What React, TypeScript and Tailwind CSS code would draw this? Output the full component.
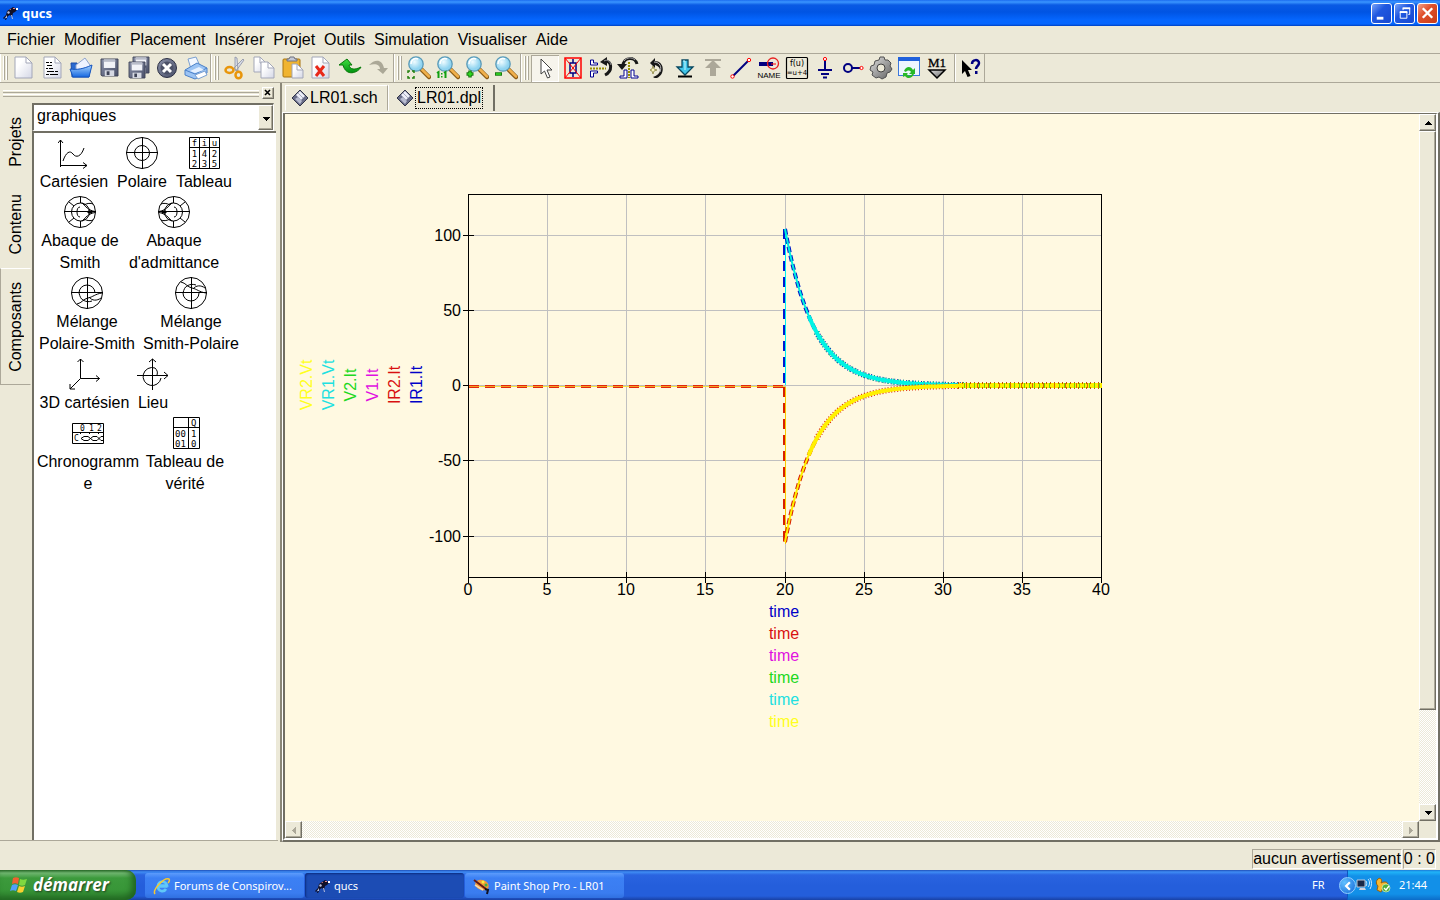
import { useState } from 'react';
import type { ReactNode } from 'react';

// 24x24 icon shell
const Icon = ({ children, className = 'w-6 h-6' }: { children: ReactNode; className?: string }) => (
  <svg viewBox="0 0 24 24" className={className} fill="none" aria-hidden="true">
    {children}
  </svg>
);

const Page = ({ x = 3, y = 1, w = 17, h = 21 }: { x?: number; y?: number; w?: number; h?: number }) => (
  <>
    <path
      d={`M${x} ${y}h${w - 6}l6 6v${h - 6}h-${w}z`}
      fill="url(#paper)"
      stroke="#a3a7b8"
      strokeWidth="1"
    />
    <path d={`M${x + w - 6} ${y}v6h6z`} fill="#fff" stroke="#a3a7b8" strokeWidth="1" />
  </>
);

const Floppy = ({ x, y, s }: { x: number; y: number; s: number }) => (
  <g transform={`translate(${x} ${y}) scale(${s / 18})`}>
    <path d="M0 0h18v18H1l-1-1z" fill="url(#steel)" stroke="#3e4356" />
    <rect x="3" y="0.5" width="12" height="9" fill="#f2f3f8" />
    <rect x="3" y="1" width="12" height="2" fill="#b9bdca" />
    <rect x="4" y="12" width="10" height="6" fill="#d6d9e2" />
    <rect x="6" y="13" width="3" height="4" fill="#3e4356" />
  </g>
);

const Lens = ({ children }: { children: ReactNode }) => (
  <Icon>
    <path d="M14 13l8 8" stroke="#8a5a14" strokeWidth="4.5" strokeLinecap="round" />
    <path d="M15 13.500l7 7" stroke="#f0b04c" strokeWidth="2.500" strokeLinecap="round" />
    <circle cx="9" cy="8" r="7.200" fill="url(#glass)" stroke="#5a9ab8" strokeWidth="1.300" />
    <path d="M4 8a5 5 0 0 1 7-5" stroke="#fff" strokeWidth="1.500" />
    {children}
  </Icon>
);

const Bird = ({ className }: { className?: string }) => (
  <svg viewBox="0 0 16 16" className={className} aria-hidden="true">
    <path d="M1 13l3-3 1-4 3-2 3-2 2 1 2 2-2 2-2 1-1 4-2-2-2 1-2 4H3l1-3-2 2z" fill="#101028" />
    <path d="M5 7l2-1 1 2-2 1zM3 13l2-3v3zM9 10l1 4h1l-1-4z" fill="#b6bddc" />
    <path d="M11 3h2v1h-2zM7 5l2-1v1z" fill="#e88080" />
    <path d="M14 3h2v2h-2z" fill="#fff" />
  </svg>
);

const Defs = () => (
  <svg className="absolute w-0 h-0" aria-hidden="true">
    <defs>
      <linearGradient id="paper" x1="0" y1="0" x2="1" y2="1">
        <stop offset="0.3" stopColor="#ffffff" />
        <stop offset="1" stopColor="#d4d7e6" />
      </linearGradient>
      <linearGradient id="steel" x1="0" y1="0" x2="1" y2="1">
        <stop offset="0" stopColor="#8990a8" />
        <stop offset="1" stopColor="#4a5068" />
      </linearGradient>
      <radialGradient id="glass" cx="0.4" cy="0.35">
        <stop offset="0" stopColor="#f0fcff" />
        <stop offset="1" stopColor="#90d4f0" />
      </radialGradient>
      <linearGradient id="folder" x1="0" y1="0" x2="0" y2="1">
        <stop offset="0" stopColor="#a8d4ff" />
        <stop offset="1" stopColor="#1668e0" />
      </linearGradient>
      <linearGradient id="grey" x1="0" y1="0" x2="1" y2="1">
        <stop offset="0" stopColor="#e0e0e0" />
        <stop offset="1" stopColor="#606060" />
      </linearGradient>
      <linearGradient id="green" x1="0" y1="0" x2="0" y2="1">
        <stop offset="0" stopColor="#40e040" />
        <stop offset="1" stopColor="#009010" />
      </linearGradient>
    </defs>
  </svg>
);

type Tool = { label: string; icon: ReactNode; active?: boolean };

const fileTools: Tool[] = [
  { label: 'Nouveau', icon: <Icon><Page /></Icon> },
  {
    label: 'Nouveau texte',
    icon: (
      <Icon>
        <Page />
        <path d="M5 6.500h3M9 6.500h2M6 9.500h5M5 12.500h2M8 12.500h4M6 15.500h7M14 15.500h3M5 18.500h3M9 18.500h8" stroke="#000" />
      </Icon>
    ),
  },
  {
    label: 'Ouvrir',
    icon: (
      <Icon>
        <path d="M2 7h6l2 2h10v12H3z" fill="#2a6ad0" stroke="#1a4ca8" />
        <path d="M7 9l9-7 5 7v8H7z" fill="#eef3ff" stroke="#8fa4cc" />
        <path d="M1 13c7 1 13 0 22-4l-3 12H4z" fill="url(#folder)" stroke="#1656c0" />
      </Icon>
    ),
  },
  { label: 'Enregistrer', icon: <Icon><Floppy x={3} y={3} s={17} /></Icon> },
  {
    label: 'Tout enregistrer',
    icon: <Icon><Floppy x={6} y={1} s={16} /><Floppy x={2} y={6} s={16} /></Icon>,
  },
  {
    label: 'Fermer',
    icon: (
      <Icon>
        <circle cx="12" cy="12" r="9.500" fill="url(#steel)" stroke="#2c3044" />
        <circle cx="12" cy="12" r="6.500" fill="#4c5268" />
        <path d="M8 8l8 8M16 8l-8 8" stroke="#fff" strokeWidth="3" />
      </Icon>
    ),
  },
  {
    label: 'Imprimer',
    icon: (
      <Icon>
        <path d="M4 3l8-2 4 9-9 3z" fill="#f4f8ff" stroke="#7ba0d0" />
        <path d="M1 14l12-7 10 5v5l-12 6-10-4z" fill="#9cc4f4" stroke="#4a80c8" />
        <path d="M1 14l10 4 12-6" stroke="#4a80c8" />
        <path d="M6 15l9-4 5 3-9 3z" fill="#e6f1ff" />
        <path d="M11 19l10-4 2 4-9 4z" fill="#fff" stroke="#7ba0d0" />
      </Icon>
    ),
  },
];

const editTools: Tool[] = [
  {
    label: 'Couper',
    icon: (
      <Icon>
        <path d="M12 1l2 1 1 13-3-2zM21 4l-1-1-9 9 2 3z" fill="#d8dce6" stroke="#8a90a4" strokeWidth="0.800" />
        <ellipse cx="6.500" cy="14" rx="4" ry="3" stroke="#e8960c" strokeWidth="2.500" />
        <ellipse cx="15.500" cy="19" rx="3" ry="3.300" stroke="#e8960c" strokeWidth="2.500" />
      </Icon>
    ),
  },
  {
    label: 'Copier',
    icon: <Icon><Page x={2} y={1} w={12} h={15} /><Page x={9} y={6} w={13} h={16} /></Icon>,
  },
  {
    label: 'Coller',
    icon: (
      <Icon>
        <rect x="2" y="3" width="17" height="18" rx="1" fill="#f0b430" stroke="#a87410" />
        <path d="M6 5V3h2l1-2h4l1 2h2v2z" fill="#c4c8d4" stroke="#6c7080" />
        <Page x={11} y={8} w={11} h={14} />
      </Icon>
    ),
  },
  {
    label: 'Effacer',
    icon: <Icon><Page /><path d="M7 10l8 10M15 10l-8 10" stroke="#e82818" strokeWidth="3" /></Icon>,
  },
  {
    label: 'Annuler',
    icon: <Icon><path d="M1 9l8-6 5 6h-3c1 5 6 5 12 2-3 6-15 10-18-2z" fill="url(#green)" stroke="#087808" /></Icon>,
  },
  {
    label: 'Rétablir',
    icon: <Icon><path d="M2 9c6-6 13-6 15 3h4l-5 6-6-5h3c0-4-4-6-11-4z" fill="#aba897" /></Icon>,
  },
];

const viewTools: Tool[] = [
  {
    label: 'Voir tout',
    icon: <Lens><path d="M1 17v-2h2M5 15h2v2M1 20v2h2M5 22h2v-2" stroke="#20800c" strokeWidth="1.500" /></Lens>,
  },
  {
    label: 'Voir 1:1',
    icon: <Lens><path d="M1 17l1.500-1v6M8 17l1.500-1v6" stroke="#10a010" strokeWidth="2" /><path d="M5 17h1.500v1.500H5zM5 20h1.500v1.500H5z" fill="#10a010" /></Lens>,
  },
  {
    label: 'Zoom avant',
    icon: <Lens><path d="M5 14.500v7M1.500 18h7" stroke="#187810" strokeWidth="3.500" /><path d="M5 15.500v5M2.500 18h5" stroke="#30e020" strokeWidth="1.500" /></Lens>,
  },
  {
    label: 'Zoom arrière',
    icon: <Lens><path d="M1 18h7" stroke="#187810" strokeWidth="3.500" /><path d="M2 18h5" stroke="#30e020" strokeWidth="1.500" /></Lens>,
  },
];

const drawTools: Tool[] = [
  {
    label: 'Sélectionner',
    active: true,
    icon: <Icon><path d="M8 3v15l3.500-3 3 7 2.500-1-3-7h5z" fill="#fff" stroke="#404040" /></Icon>,
  },
  {
    label: 'Activer',
    icon: (
      <Icon>
        <rect x="4" y="2" width="16" height="20" stroke="#f00" strokeWidth="1.500" />
        <path d="M12 3v4M12 17v4M9 7h6v10H9z" stroke="#000080" strokeWidth="1.500" />
        <path d="M4 2l16 20M20 2L4 22" stroke="#f00" />
      </Icon>
    ),
  },
  {
    label: 'Miroir axe X',
    icon: (
      <Icon>
        <path d="M1.500 4v5h7V7h-4V4zM1.500 21v-6h7v2h-4v4z" fill="#fff" stroke="#000090" />
        <path d="M1 12.500h16" stroke="#989000" strokeWidth="2" strokeDasharray="2 1" />
        <path d="M16 5c7 0 8 10 0 14" stroke="#181818" strokeWidth="3" />
        <path d="M11 6l7-5v9z" fill="#181818" />
        <path d="M15 5c3-2 6 0 7 4" stroke="#999" />
      </Icon>
    ),
  },
  {
    label: 'Miroir axe Y',
    icon: (
      <Icon>
        <path d="M3 22v-2h4v-6h3v8zM21 22v-2h-4v-6h-3v8z" fill="#fff" stroke="#000090" />
        <path d="M12 6v16" stroke="#989000" strokeWidth="2" strokeDasharray="2 1" />
        <path d="M6 10C6 1 18 0 20 8" stroke="#181818" strokeWidth="3" />
        <path d="M0 8h10l-5 6z" fill="#181818" />
        <path d="M7 5c3-4 8-4 11-1" stroke="#aaa" />
      </Icon>
    ),
  },
  {
    label: 'Tourner',
    icon: (
      <Icon>
        <path d="M5 7l5-5v3c9 0 11 13 2 17-2 0-3 0-4-1 9-3 9-10 2-12v3z" fill="#181818" />
        <path d="M9 6c6 0 8 5 6 10" stroke="#bbb" />
        <path d="M8 10l1 3 3 1-3 1-1 3-1-3-2-1 2-1z" fill="#f8f4c0" stroke="#807830" strokeWidth="0.700" />
      </Icon>
    ),
  },
  {
    label: 'Entrer',
    icon: (
      <Icon>
        <path d="M9 4h6v7h5l-8 8-8-8h5z" fill="#40c4e8" stroke="#084860" strokeWidth="1.300" />
        <path d="M10 5h2v9" stroke="#c8f8ff" />
        <path d="M5 20.500h14" stroke="#000" strokeWidth="2" />
      </Icon>
    ),
  },
  { label: 'Sortir', icon: <Icon><path d="M4 3h16v2h-7l7 7h-5v8H9v-8H4l7-7H4z" fill="#aca899" /></Icon> },
  {
    label: 'Fil',
    icon: (
      <Icon>
        <path d="M4 20L20 4" stroke="#000080" strokeWidth="2" />
        <circle cx="3.500" cy="20.500" r="1.700" fill="#fff" stroke="#f00" />
        <circle cx="20" cy="4" r="1.700" fill="#fff" stroke="#f00" />
      </Icon>
    ),
  },
  {
    label: 'Étiquette',
    icon: (
      <Icon>
        <path d="M2 8h14" stroke="#000080" strokeWidth="4" />
        <path d="M14 8h5" stroke="#f00" />
        <circle cx="16" cy="7.500" r="5.500" stroke="#e82020" strokeWidth="1.300" />
        <text x="12" y="22" textAnchor="middle" fontSize="8" fontFamily="Liberation Sans" fill="#000">NAME</text>
      </Icon>
    ),
  },
  {
    label: 'Équation',
    icon: (
      <Icon>
        <rect x="1.500" y="1.500" width="21" height="21" rx="1" stroke="#000" strokeWidth="1.200" />
        <text x="12" y="10" textAnchor="middle" fontSize="8" fontFamily="DejaVu Sans" fill="#000">f(u)</text>
        <text x="12" y="19" textAnchor="middle" fontSize="7" fontFamily="DejaVu Sans" fill="#000">=u+4</text>
      </Icon>
    ),
  },
  {
    label: 'Masse',
    icon: (
      <Icon>
        <path d="M12 4v10M5 14h14M8 18h8M10 21.500h4" stroke="#000080" strokeWidth="2" />
        <circle cx="12" cy="3" r="1.600" fill="#fff" stroke="#f00" />
      </Icon>
    ),
  },
  {
    label: 'Port',
    icon: (
      <Icon>
        <circle cx="7" cy="12" r="4" stroke="#000080" strokeWidth="2" />
        <path d="M11 12h8" stroke="#000080" strokeWidth="2" />
        <circle cx="20.500" cy="12" r="1.600" fill="#fff" stroke="#f00" />
      </Icon>
    ),
  },
  {
    label: 'Simuler',
    icon: (
      <Icon>
        <path
          d="M11 1h4l1 3 3 0 3 3-1 3 2 3-2 3-3 1-1 4-4 2-3-2-3 1-4-3 1-3-3-2 1-4 3-1 1-4 4-1z"
          fill="url(#grey)"
          stroke="#505050"
        />
        <circle cx="12" cy="12" r="4" fill="#ece9d8" stroke="#404040" />
      </Icon>
    ),
  },
  {
    label: 'Afficher',
    icon: (
      <Icon>
        <rect x="1.500" y="1.500" width="21" height="18" fill="#eef5ff" stroke="#3c78dc" />
        <path d="M1 1h22v4H1z" fill="#2060dc" />
        <path d="M7 15c2-5 7-5 9-1l2-2v6h-6l2-2c-1-2-4-2-5 0zM17 18c-2 5-7 5-9 2l-2 1v-4h5l-1 1c1 2 4 2 5 0z" fill="#28b828" />
      </Icon>
    ),
  },
  {
    label: 'Marqueur',
    icon: (
      <Icon>
        <text x="12" y="11" textAnchor="middle" fontSize="13" fontFamily="Liberation Serif" fill="#000" stroke="#000" strokeWidth="0.300">M1</text>
        <path d="M4 14h16l-8 8z" fill="url(#grey)" stroke="#000" strokeWidth="1.500" />
      </Icon>
    ),
  },
];

const helpTool: Tool = {
  label: "Qu'est-ce que c'est ?",
  icon: (
    <Icon>
      <path d="M4 4v14l3-3 2.500 6 3-1-2.500-6h4z" fill="#000" />
      <path d="M14 8c0-5 7-5 7-1 0 3-3 3-3 6" stroke="#000080" strokeWidth="2.500" />
      <path d="M17 15h2.500v3H17z" fill="#000080" />
    </Icon>
  ),
};

const ToolButton = ({ tool }: { tool: Tool }) => (
  <button
    aria-label={tool.label}
    className={
      tool.active
        ? 'flex-1 h-[27px] flex items-center justify-center bg-[#f6f4ec] shadow-[inset_1px_1px_0_#aca899,inset_-1px_-1px_0_#ffffff]'
        : 'flex-1 h-[27px] flex items-center justify-center'
    }
  >
    {tool.icon}
  </button>
);

const Handle = () => (
  <div className="flex gap-px h-6 mx-0.5">
    <div className="w-0.5 border-l border-white bg-[#aca899]" />
    <div className="w-0.5 border-l border-white bg-[#aca899]" />
  </div>
);

const ToolGroup = ({ tools, width, children }: { tools: Tool[]; width: string; children?: ReactNode }) => (
  <div className="flex items-center border-r border-r-[#aca899] border-l border-l-white">
    <Handle />
    <div className={`flex ${width}`}>
      {tools.map((t) => (
        <ToolButton key={t.label} tool={t} />
      ))}
    </div>
    {children}
  </div>
);

// Component palette drawings, 32x32
const Draw = ({ children }: { children: ReactNode }) => (
  <svg viewBox="0 0 32 32" className="w-8 h-8" fill="none" stroke="#000" strokeWidth="1" aria-hidden="true">
    {children}
  </svg>
);

const smith = (
  <>
    <circle cx="16" cy="16" r="15.500" />
    <path d="M0 15.500h32M16.500 1v6M16.500 25v6" />
    <circle cx="16.500" cy="16" r="9" />
    <path d="M31 15.500c-6-1-10-5-13-9M31 16.500c-6 1-10 5-13 9M5 6l5 4M5 26l5-4M20 9c3-2 7-2 9-1M20 23c3 2 7 2 9 1M13 16c0-3 1-5 3-5M13 16c0 3 1 5 3 5" />
    <path d="M24 15h4v2h-4z" fill="#000" />
  </>
);

const palette: { label: ReactNode; width: string; icon: ReactNode; name: string }[][] = [
  [
    {
      name: 'cartesien',
      label: 'Cartésien',
      width: 'w-[72px]',
      icon: <Draw><path d="M2.500 30V3M0 6l2.500-3L5 6M2 28.500h27M25 25.500l4 3-4 3M5 24c3-9 7-11 10-7s8 3 11-6" /></Draw>,
    },
    {
      name: 'polaire',
      label: 'Polaire',
      width: 'w-[52px]',
      icon: <Draw><circle cx="16" cy="16" r="15.500" /><circle cx="16" cy="16" r="7.500" /><path d="M0 15.500h32M16.500 0v32" /></Draw>,
    },
    {
      name: 'tableau',
      label: 'Tableau',
      width: 'w-[60px]',
      icon: (
        <Draw>
          <path d="M1.500 .5h30v31h-30zM1.500 10.500h30M11.500 0v32M21.500 0v32" />
          <g fill="#000" stroke="none" fontFamily="DejaVu Sans Mono" fontSize="9" textAnchor="middle">
            <text x="6.500" y="8.500">f</text><text x="16.500" y="8.500">i</text><text x="26.500" y="8.500">u</text>
            <text x="6.500" y="19.500">1</text><text x="16.500" y="19.500">4</text><text x="26.500" y="19.500">2</text>
            <text x="6.500" y="29.500">2</text><text x="16.500" y="29.500">3</text><text x="26.500" y="29.500">5</text>
          </g>
        </Draw>
      ),
    },
  ],
  [
    { name: 'smith', label: <>Abaque de<br />Smith</>, width: 'w-[84px]', icon: <Draw>{smith}</Draw> },
    {
      name: 'admittance',
      label: <>Abaque<br />d'admittance</>,
      width: 'w-[92px]',
      icon: <Draw><g transform="translate(32 0) scale(-1 1)">{smith}</g></Draw>,
    },
  ],
  [
    {
      name: 'polaire-smith',
      label: <>Mélange<br />Polaire-Smith</>,
      width: 'w-[98px]',
      icon: (
        <Draw>
          <circle cx="16" cy="16" r="15.500" />
          <path d="M0 15.500h32M16.500 0v32M8 16a8 8 0 0 1 16 0M8 16c1 4 2 6 4 7M6 27c5-1 6-5 11-6s7-4 14-5M12 23c3 2 6 2 9 1M18 20c3 4 8 4 12 1" />
        </Draw>
      ),
    },
    {
      name: 'smith-polaire',
      label: <>Mélange<br />Smith-Polaire</>,
      width: 'w-[98px]',
      icon: (
        <Draw>
          <circle cx="16" cy="16" r="15.500" />
          <path d="M0 15.500h32M16.500 0v32M8 16a8 8 0 0 0 16 0M8 16c1-4 2-6 4-7M6 5c5 1 6 5 11 6s7 4 14 5M12 9c3-2 6-2 9-1M18 12c3-4 8-4 12-1" />
        </Draw>
      ),
    },
  ],
  [
    {
      name: '3d',
      label: '3D cartésien',
      width: 'w-[93px]',
      icon: <Draw><path d="M11.500 1v19.500h19M8.500 4l3-3 3 3M27 17.500l3.500 3-3.500 3M11.500 20.500L1 31M1 26v5h5" /></Draw>,
    },
    {
      name: 'lieu',
      label: 'Lieu',
      width: 'w-8',
      icon: <Draw><path d="M0 17.500h31M27 14l4 3.500-4 3.500M15.500 1v31M12 4l3.500-3L19 4M20 17c1-3 0-5-2-7a9 9 0 1 0 6 10" /></Draw>,
    },
  ],
  [
    {
      name: 'chronogramme',
      label: <>Chronogramm<br />e</>,
      width: 'w-[100px]',
      icon: (
        <Draw>
          <path d="M.5 6.500h31v20H.5zM.5 15.500h31M8.500 15v2M17.500 15v2M26.500 15v2M9 21.500l3-2h4l5 4h4l4-4h3M9 21.500l3 2h4l5-4h4l4 4h3" />
          <g fill="#000" stroke="none" fontFamily="DejaVu Sans Mono" fontSize="8">
            <text x="8" y="14">0</text><text x="17" y="14">1</text><text x="25" y="14">2</text><text x="2" y="24">C</text>
          </g>
        </Draw>
      ),
    },
    {
      name: 'verite',
      label: <>Tableau de<br />vérité</>,
      width: 'w-[82px]',
      icon: (
        <Draw>
          <path d="M4.500 .5h26v31h-26zM4.500 10.500h26M19.500 0v32" />
          <g fill="#000" stroke="none" fontFamily="DejaVu Sans Mono" fontSize="9">
            <text x="22" y="9">Q</text><text x="6" y="20">00</text><text x="22" y="20">1</text>
            <text x="6" y="29.500">01</text><text x="22" y="29.500">0</text>
          </g>
        </Draw>
      ),
    },
  ],
];

// Plot area, in canvas pixels
const X0 = 468.5;
const Y0 = 385.5;
const px = (t: number) => X0 + t * 15.825;
const py = (v: number) => Y0 - v * 1.505;

const decay = (amp: number, from: number, to: number) => {
  const pts: string[] = [];
  for (let t = from; t <= to + 0.001; t += 0.1) {
    pts.push(`${px(t).toFixed(1)},${py(amp * Math.exp(-(t - 20) / 1.85)).toFixed(1)}`);
  }
  return pts.join(' ');
};

const xTicks = [0, 5, 10, 15, 20, 25, 30, 35, 40];
const yTicks = [100, 50, 0, -50, -100];
const traces = [
  { name: 'IR1.It', color: '#0000c8', x: 422 },
  { name: 'IR2.It', color: '#d81010', x: 400 },
  { name: 'V1.It', color: '#e010e0', x: 378 },
  { name: 'V2.It', color: '#20d820', x: 356 },
  { name: 'VR1.Vt', color: '#20e0e0', x: 334 },
  { name: 'VR2.Vt', color: '#ffff20', x: 312 },
];

const Chart = () => (
  <svg
    viewBox="296 184 820 556"
    className="w-[820px] h-[556px] ml-[11px] mt-[70px] shrink-0"
    fill="none"
    fontFamily="Liberation Sans"
    fontSize="16"
    role="img"
    aria-label="LR01"
  >
    <g stroke="#c0c0c0" shapeRendering="crispEdges">
      {xTicks.slice(1, -1).map((t) => (
        <path key={t} d={`M${Math.floor(px(t)) + 0.5} 195V577`} />
      ))}
      {yTicks.map((v) => (
        <path key={v} d={`M469 ${Math.floor(py(v)) + 0.5}H1101`} />
      ))}
    </g>
    <g stroke="#000" shapeRendering="crispEdges">
      <rect x="468.500" y="194.500" width="633" height="383" />
      {xTicks.map((t) => (
        <path key={t} d={`M${Math.floor(px(t)) + 0.5} 572V583`} />
      ))}
      {yTicks.map((v) => (
        <path key={v} d={`M463 ${Math.floor(py(v)) + 0.5}h11`} />
      ))}
    </g>
    <g fill="#000">
      {xTicks.map((t) => (
        <text key={t} x={Math.floor(px(t))} y="595" textAnchor="middle">{t}</text>
      ))}
      {yTicks.map((v) => (
        <text key={v} x="461" y={Math.floor(py(v)) + 6} textAnchor="end">{v}</text>
      ))}
    </g>

    {/* flat part, then the step at t = 20 */}
    <g shapeRendering="crispEdges">
      <path d="M469 386.500H785" stroke="#f8e040" />
      <path d="M469 386.500H785" stroke="#e02810" strokeWidth="3" strokeDasharray="10 6" />
      <path d="M469 386.500H785" stroke="#f4a020" strokeDasharray="10 6" />
      <path d="M784 229V385" stroke="#0018d0" strokeWidth="2" strokeDasharray="10 6" />
      <path d="M785.500 229V385" stroke="#00f0f0" />
      <path d="M784 387V544" stroke="#d82000" strokeWidth="2" strokeDasharray="10 6" />
      <path d="M785.500 387V544" stroke="#f8c800" />
    </g>

    <polyline points={decay(104, 20, 22)} stroke="#0018c8" strokeWidth="4" strokeDasharray="6 3" />
    <polyline points={decay(104, 20, 22)} stroke="#00f0e0" strokeWidth="2" />
    <polyline points={decay(104, 22, 31.5)} stroke="#0030c0" strokeWidth="6" strokeDasharray="1 2" />
    <polyline points={decay(104, 22, 31.5)} stroke="#00c870" strokeWidth="6" strokeDasharray="1 4" />
    <polyline points={decay(104, 21.5, 31.5)} stroke="#00f4e4" strokeWidth="4" />

    <polyline points={decay(-104, 20, 22)} stroke="#d82000" strokeWidth="4" strokeDasharray="6 3" />
    <polyline points={decay(-104, 20, 22)} stroke="#fff000" strokeWidth="2" />
    <polyline points={decay(-104, 22, 31)} stroke="#d82000" strokeWidth="6" strokeDasharray="1 2" />
    <polyline points={decay(-104, 21.5, 31)} stroke="#fff000" strokeWidth="4" />
    <g shapeRendering="crispEdges">
      <path d="M925 383.500H975" stroke="#00e8e0" strokeDasharray="3 1" />
      <path d="M958 385.500H1102" stroke="#fff000" strokeWidth="5" />
      <path d="M958 385.500H1102" stroke="#c05800" strokeWidth="7" strokeDasharray="1 3" />
      <path d="M958 385.500H1102" stroke="#fff000" strokeWidth="3" />
      <path d="M964 385.500H1102" stroke="#70d800" strokeWidth="5" strokeDasharray="1 4" />
      <path d="M966 385.500H1102" stroke="#d87000" strokeWidth="5" strokeDasharray="1 10" />
    </g>

    {traces.map((t, i) => (
      <g key={t.name} fill={t.color} textAnchor="middle">
        <text transform={`translate(${t.x} 385) rotate(-90)`}>{t.name}</text>
        <text x="784" y={617 + i * 22}>time</text>
      </g>
    ))}
  </svg>
);

const TRACK = 'bg-[repeating-conic-gradient(#ffffff_0_25%,#ece9d8_0_50%)] bg-[length:2px_2px]';
const RAISED = 'bg-[#ece9d8] border border-t-white border-l-white border-b-[#716f64] border-r-[#716f64] shadow-[inset_-1px_-1px_0_#aca899]';

const Arrow = ({ d, color = '#000' }: { d: string; color?: string }) => (
  <svg viewBox="0 0 8 8" className="w-2 h-2" aria-hidden="true">
    <path d={d} fill={color} shapeRendering="crispEdges" />
  </svg>
);

const FileIcon = () => (
  <svg viewBox="0 0 18 18" className="w-[18px] h-[18px]" aria-hidden="true">
    <path d="M9 1l8 8-8 8-8-8z" fill="#686c88" stroke="#303448" />
    <path d="M9 2l5 5-4 4-5-5z" fill="#eceef8" />
    <path d="M7 4l5 5" stroke="#a8acc0" />
    <path d="M4 10l3-2 4 4-2 3z" fill="#b8bcd0" />
  </svg>
);

const menus = ['Fichier', 'Modifier', 'Placement', 'Insérer', 'Projet', 'Outils', 'Simulation', 'Visualiser', 'Aide'];

const sideTabs = [
  { name: 'Projets', height: 'h-[78px]' },
  { name: 'Contenu', height: 'h-[87px]' },
  { name: 'Composants', height: 'h-[117px]' },
];

const WINDOW_BUTTON = 'w-[21px] h-[21px] flex items-center justify-center rounded-[3px] border border-white';

const TitleBar = () => (
  <header className="h-[26px] shrink-0 flex items-center justify-between pl-0.5 pr-0.5 bg-[linear-gradient(#1c6cf0_0,#3a95ff_2px,#0a5ae4_5px,#0054e3_12px,#0566fe_20px,#0566fe_24px,#0040c0_26px)]">
    <h1 className="flex items-center gap-1 text-white font-bold text-[13px] font-['Open_Sans',sans-serif]">
      <Bird className="w-4 h-4" />
      qucs
    </h1>
    <div className="flex gap-0.5">
      <button aria-label="Réduire" className={`${WINDOW_BUTTON} bg-[linear-gradient(135deg,#7aa4f8,#2058e0_40%,#1848d0)]`}>
        <svg viewBox="0 0 20 20" className="w-5 h-5"><path d="M5 14h7v3H5z" fill="#fff" /></svg>
      </button>
      <button aria-label="Restaurer" className={`${WINDOW_BUTTON} bg-[linear-gradient(135deg,#7aa4f8,#2058e0_40%,#1848d0)]`}>
        <svg viewBox="0 0 20 20" className="w-5 h-5" fill="none" stroke="#fff">
          <path d="M5.500 9v6.500h7V9z" /><path d="M5 9h8" strokeWidth="2" />
          <path d="M8.500 7V5M14 11.500h1.500V5" /><path d="M8 5h8" strokeWidth="2" />
        </svg>
      </button>
      <button aria-label="Fermer" className={`${WINDOW_BUTTON} bg-[linear-gradient(135deg,#f0a088,#e0502c_40%,#c83c18)]`}>
        <svg viewBox="0 0 20 20" className="w-5 h-5"><path d="M5 5l10 10M15 5L5 15" stroke="#fff" strokeWidth="2.500" /></svg>
      </button>
    </div>
  </header>
);

const Dock = () => {
  const [tab, setTab] = useState('Composants');

  return (
    <aside className="w-[278px] shrink-0 flex flex-col mb-px border-b border-[#aca899]">
      <div className="h-5 flex items-center gap-[3px] pl-[3px] pr-1">
        <div className="flex-1 flex flex-col gap-px">
          <div className="h-[3px] border-t border-t-white border-b border-[#aca899]" />
          <div className="h-[3px] border-t border-t-white border-b border-[#aca899]" />
        </div>
        <button aria-label="Fermer le panneau" className={`w-3 h-3 flex items-center justify-center ${RAISED}`}>
          <svg viewBox="0 0 8 8" className="w-2 h-2"><path d="M1 1l5 5M6 1L1 6" stroke="#000" strokeWidth="1.600" /></svg>
        </button>
      </div>
      <div className="flex-1 flex min-h-0">
        <div className="w-8 flex flex-col">
          {sideTabs.map((t) => (
            <button
              key={t.name}
              onClick={() => setTab(t.name)}
              className={`${t.height} w-[31px] flex items-center justify-center border ${
                t.name === tab
                  ? 'border-t-white border-l-[#aca899] border-b-[#aca899] border-r-transparent'
                  : 'border-transparent'
              }`}
            >
              <span className="[writing-mode:vertical-rl] rotate-180 leading-[18px]">{t.name}</span>
            </button>
          ))}
        </div>
        <div className="flex-1 flex flex-col">
          <div className="relative w-[242px] h-7 border-t-2 border-l-2 border-[#716f64] border-b border-b-white border-r border-r-white bg-white">
            <select aria-label="Catégorie" className="appearance-none w-full h-full pl-[3px] pb-[3px] outline-none bg-white">
              <option>graphiques</option>
            </select>
            <span className={`pointer-events-none absolute right-0 top-0 bottom-0 w-[15px] flex items-center justify-center ${RAISED}`}>
              <Arrow d="M1 3h7v1H7v1H6v1H5v1H4V6H3V5H2V4H1z" />
            </span>
          </div>
          <div className="flex-1 w-[244px] flex flex-col gap-[3px] pt-1 pl-1 bg-white border-t-2 border-l-2 border-[#716f64]">
            {palette.map((row, i) => (
              <div key={i} className="flex gap-1.5">
                {row.map((item) => (
                  <button key={item.name} className={`${item.width} flex flex-col items-center gap-0.5 leading-[22px] whitespace-nowrap`}>
                    {item.icon}
                    <span>{item.label}</span>
                  </button>
                ))}
              </div>
            ))}
          </div>
        </div>
      </div>
    </aside>
  );
};

const Workspace = () => (
  <main className="flex-1 min-w-0 flex flex-col ml-0.5 border-l-2 border-[#8a8778]">
    <div className="h-[29px] shrink-0 flex pl-[3px] pt-0.5">
      <button className="w-[103px] h-[26px] flex items-center pl-[5px] gap-px border border-t-white border-l-white border-b-transparent border-r-[#aca899]">
        <FileIcon />
        LR01.sch
      </button>
      <button className="w-[107px] h-[26px] flex items-center pl-[7px] gap-px border-l border-l-white border-r-2 border-r-[#716f64]">
        <FileIcon />
        <span className="px-px border border-dotted border-black leading-[20px]">LR01.dpl</span>
      </button>
    </div>
    <div className="flex-1 min-h-0 flex flex-col border-t border-t-white border-l border-l-white border-r-2 border-r-[#716f64] border-b-2 border-b-[#716f64]">
      <div className="flex-1 min-h-0 flex flex-col border-t border-t-[#716f64] border-l-2 border-l-[#716f64] border-r-2 border-r-white border-b-2 border-b-white">
        <div className="flex-1 min-h-0 flex">
          <div className="flex-1 min-w-0 overflow-hidden flex bg-[#fff9e1]">
            <Chart />
          </div>
          <div className={`w-[17px] flex flex-col ${TRACK}`}>
            <button aria-label="Défiler vers le haut" className={`h-[17px] flex items-center justify-center ${RAISED}`}>
              <Arrow d="M4 2h1v1h1v1h1v1h1v1H1V5h1V4h1V3h1z" />
            </button>
            <div className={`grow-[86] ${RAISED}`} />
            <div className="grow-[14]" />
            <button aria-label="Défiler vers le bas" className={`h-[17px] flex items-center justify-center ${RAISED}`}>
              <Arrow d="M1 2h7v1H7v1H6v1H5v1H4V5H3V4H2V3H1z" />
            </button>
          </div>
        </div>
        <div className="h-[17px] shrink-0 flex">
          <div className={`flex-1 flex justify-between ${TRACK}`}>
            <button aria-label="Défiler à gauche" className={`w-[17px] flex items-center justify-center ${RAISED}`}>
              <Arrow d="M5 1h1v7H5V7H4V6H3V5H2V4h1V3h1V2h1z" color="#aca899" />
            </button>
            <button aria-label="Défiler à droite" className={`w-[17px] flex items-center justify-center ${RAISED}`}>
              <Arrow d="M2 1h1v1h1v1h1v1h1v1H5v1H4v1H3v1H2z" color="#aca899" />
            </button>
          </div>
          <div className="w-[17px]" />
        </div>
      </div>
    </div>
  </main>
);

const TASK = 'w-[159px] h-[25px] flex items-center gap-[3px] pl-2 rounded-[3px] whitespace-nowrap';

const Taskbar = () => (
  <footer className="h-[30px] shrink-0 flex items-stretch text-white text-[11px] font-['Noto_Sans',sans-serif] bg-[linear-gradient(#1f4fb8_0,#3f8cf4_2px,#2a64e0_5px,#245edb_15px,#245edb_26px,#1941a5_30px)]">
    <button className="w-[136px] flex items-center gap-1 pl-[9px] rounded-r-[10px] bg-[linear-gradient(#2c6c2c_0,#72b872_3px,#3c9a3c_8px,#389638_20px,#2a7a2a_30px)] shadow-[inset_-4px_-2px_6px_#206420] font-['Open_Sans',sans-serif] font-bold italic text-[17px] [text-shadow:1px_1px_2px_#204020]">
      <svg viewBox="0 0 20 20" className="w-5 h-5" aria-hidden="true">
        <path d="M4 3c2-1 4-1 6 0L9 9C7 8 5 8 3 9z" fill="#f06030" />
        <path d="M11 4c2 1 4 1 7 0l-2 6c-2 1-4 1-6 0z" fill="#80d840" />
        <path d="M3 10c2-1 4-1 6 0l-2 6c-2-1-4-1-6 0z" fill="#50a0f8" />
        <path d="M10 11c2 1 4 1 6 0l-2 6c-2 1-4 1-6 0z" fill="#f8d030" />
      </svg>
      démarrer
    </button>
    <nav className="flex-1 flex items-center gap-px pl-[9px] pt-px">
      <button className={`${TASK} bg-[linear-gradient(#5c9cfc,#3c80f4_5px,#3a7cf0_20px,#3070e0)]`}>
        <svg viewBox="0 0 18 18" className="w-[18px] h-[18px]" fill="none" aria-hidden="true">
          <path d="M14.500 9.500H5c0 5 6 6 8 2.500M5 8.500c0-5 8-5 9 0z" stroke="#60c8f8" strokeWidth="2.600" />
          <path d="M2 17C-1 13 11 0 16 2c1 1 0 3-1 4" stroke="#f8c830" strokeWidth="1.500" />
        </svg>
        Forums de Conspirov...
      </button>
      <button className={`${TASK} bg-[#1c4cb4] shadow-[inset_1px_1px_2px_#0c2c80]`}>
        <Bird className="w-[18px] h-4" />
        qucs
      </button>
      <button className={`${TASK} bg-[linear-gradient(#5c9cfc,#3c80f4_5px,#3a7cf0_20px,#3070e0)]`}>
        <svg viewBox="0 0 18 18" className="w-[18px] h-[18px]" aria-hidden="true">
          <ellipse cx="9" cy="8" rx="7" ry="5" fill="#f09838" transform="rotate(20 9 8)" />
          <circle cx="10" cy="5" r="1.500" fill="#f8f040" /><circle cx="13" cy="8" r="1.500" fill="#40b040" />
          <path d="M1 3l12 9" stroke="#601818" strokeWidth="2" />
          <path d="M2 8l8 5" stroke="#f8d8a8" strokeWidth="1.500" />
          <path d="M12 12l3 1-1 4" stroke="#101020" strokeWidth="2" fill="none" />
        </svg>
        Paint Shop Pro - LR01
      </button>
    </nav>
    <span className="flex items-center w-[35px]">FR</span>
    <div className="relative w-[93px] flex items-center justify-end pr-[13px] gap-0.5 border-l border-[#0c58c0] bg-[linear-gradient(#1c7ad8_0,#20b4f8_2px,#1290e8_6px,#1290e8_24px,#0c6cc8_30px)]">
      <button
        aria-label="Icônes masquées"
        className="absolute -left-[9px] top-[7px] w-[17px] h-[17px] rounded-full border border-[#90d0ff] bg-[radial-gradient(circle_at_30%_30%,#60c0ff,#1468d8)] flex items-center justify-center"
      >
        <svg viewBox="0 0 8 8" className="w-2.5 h-2.5"><path d="M5.500 1l-3 3 3 3" stroke="#fff" strokeWidth="1.800" fill="none" /></svg>
      </button>
      <svg viewBox="0 0 18 16" className="w-[18px] h-4" fill="none" aria-hidden="true">
        <path d="M2 3h8v7H2z" fill="#182848" stroke="#c0c8d8" />
        <path d="M4 13h7l-1-2H5z" fill="#d0d4e0" />
        <path d="M11 4c1 1 1 4 0 5M13 2c2 2 2 6 0 8M15 1c2 3 2 8 0 11" stroke="#c8e8ff" />
      </svg>
      <svg viewBox="0 0 16 16" className="w-4 h-4 mr-1.5" aria-hidden="true">
        <path d="M2 3c3-4 6 0 4 3 4-2 7-1 7 2l-4 1-3 6-4-2 1-4c-2-2-2-4-1-6z" fill="#f8b830" stroke="#986008" />
        <circle cx="11" cy="11" r="4" fill="#50b038" stroke="#d8f0c8" strokeWidth="0.700" />
        <path d="M9 11l2 2 3-4" stroke="#fff" strokeWidth="1.300" fill="none" />
      </svg>
      <time>21:44</time>
    </div>
  </footer>
);

const App = () => {
  return (
    <div className="h-screen flex flex-col overflow-hidden bg-[#ece9d8] text-black text-base leading-[18px] font-['Liberation_Sans',Arial,sans-serif]">
      <Defs />
      <TitleBar />

      <nav className="h-7 shrink-0 flex items-center gap-[9px] pl-[7px] border-b border-[#aca899]">
        {menus.map((m) => (
          <button key={m}>{m}</button>
        ))}
      </nav>

      {/* Toolbars */}
      <div className="h-[29px] shrink-0 flex border-b border-[#aca899]">
        <ToolGroup tools={fileTools} width="w-[200px]" />
        <ToolGroup tools={editTools} width="w-[172px]" />
        <ToolGroup tools={viewTools} width="w-[116px]" />
        <ToolGroup tools={drawTools} width="w-[420px]">
          <div className="self-stretch ml-[3px] w-0.5 border-l border-[#aca899] bg-white" />
          <div className="w-7 flex">
            <ToolButton tool={helpTool} />
          </div>
        </ToolGroup>
      </div>

      <div className="flex-1 min-h-0 flex">
        <Dock />
        <Workspace />
      </div>

      {/* Status bar */}
      <div className="h-7 shrink-0 flex justify-end items-end gap-px pr-1 pb-px">
        <span className="h-5 border border-t-[#aca899] border-l-[#aca899] border-b-white border-r-white">aucun avertissement</span>
        <span className="h-5 border border-t-[#aca899] border-l-[#aca899] border-b-white border-r-white">0 : 0</span>
      </div>

      <Taskbar />
    </div>
  );
};

export default App;
